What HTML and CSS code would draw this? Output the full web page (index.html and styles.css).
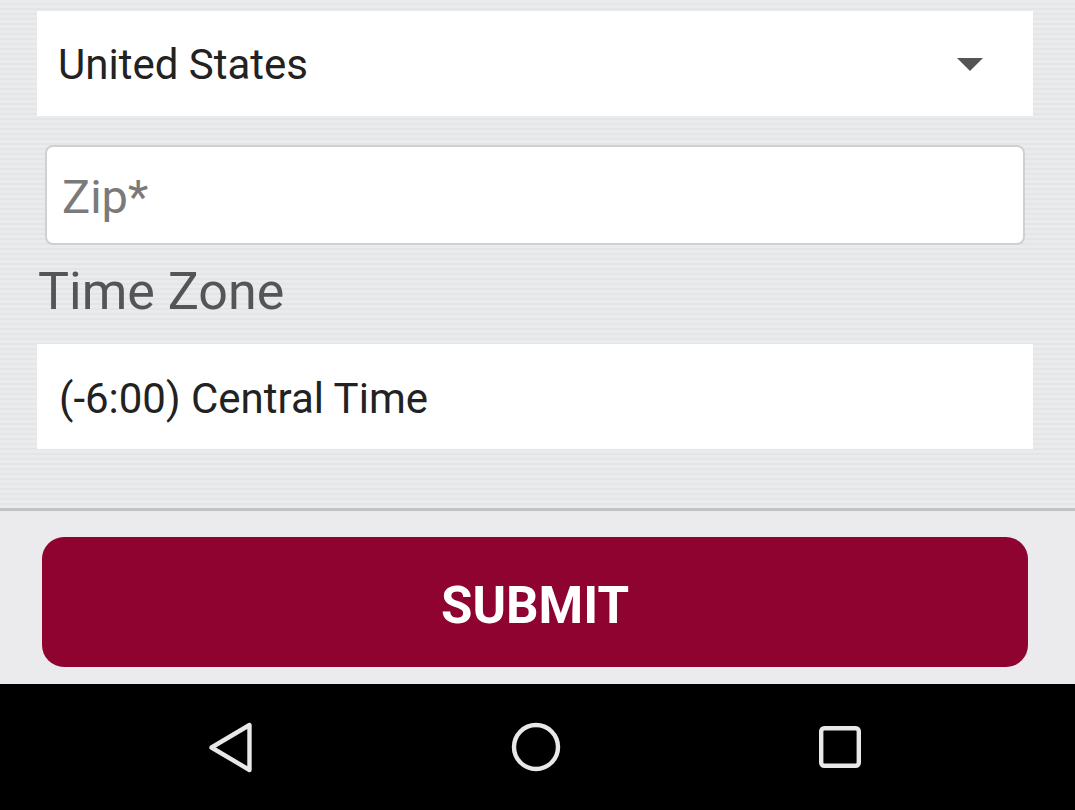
FILE: index.html
```html
<!DOCTYPE html>
<html lang="en">
<head>
<meta charset="utf-8">
<title>Form</title>
<link rel="stylesheet" href="styles.css">
</head>
<body>
<div class="screen">
  <section class="form">
    <div class="select">
      <span class="select-value">United States</span>
      <span class="caret"></span>
    </div>
    <div class="zip">
      <span class="placeholder">Zip*</span>
    </div>
    <div class="label">Time Zone</div>
    <div class="tz">
      <span class="tz-value">(-6:00) Central Time</span>
    </div>
  </section>
  <section class="footer">
    <button class="submit">SUBMIT</button>
  </section>
  <nav class="navbar">
    <svg class="nav-icon" width="60" height="60" viewBox="0 0 60 60">
      <path d="M9.5 30.5 L47.5 8 L47.5 53 Z" fill="none" stroke="#e8e8e8" stroke-width="4.4" stroke-linejoin="round"/>
    </svg>
    <svg class="nav-icon" width="60" height="60" viewBox="0 0 60 60">
      <circle cx="30" cy="30" r="22" fill="none" stroke="#e8e8e8" stroke-width="4.4"/>
    </svg>
    <svg class="nav-icon" width="60" height="60" viewBox="0 0 60 60">
      <rect x="11.2" y="11.2" width="37.6" height="37.6" rx="3" fill="none" stroke="#e8e8e8" stroke-width="4.4"/>
    </svg>
  </nav>
</div>
</body>
</html>
```
FILE: styles.css
```css
* { box-sizing: border-box; }
html, body { margin: 0; padding: 0; }
body {
  font-family: Roboto, "Noto Sans", "Liberation Sans", sans-serif;
  background: #000;
}
.screen {
  width: 1075px;
  height: 810px;
  display: flex;
  flex-direction: column;
  overflow: hidden;
}
.form {
  height: 511px;
  padding: 11px 42px 0 37px;
  background: repeating-linear-gradient(to bottom, #eaebed 0px, #eaebed 3px, #e4e5e7 3px, #e4e5e7 5px);
  border-bottom: 3px solid #c2c3c5;
  display: flex;
  flex-direction: column;
}
.select {
  height: 105px;
  background: #fff;
  display: flex;
  align-items: center;
  justify-content: space-between;
  padding: 3px 50px 0 21px;
}
.select-value {
  font-size: 42px;
  color: #222;
  line-height: 50px;
}
.caret {
  width: 0;
  height: 0;
  border-left: 13px solid transparent;
  border-right: 13px solid transparent;
  border-top: 13px solid #555;
  margin-top: -2px;
}
.zip {
  margin: 29px 8px 0 8px;
  height: 100px;
  background: #fff;
  border: 2px solid #cfd0d2;
  border-radius: 8px;
  display: flex;
  align-items: center;
  padding: 3px 0 0 15px;
}
.placeholder {
  font-size: 47px;
  color: #7a7a7a;
  line-height: 54px;
}
.label {
  margin-top: 17px;
  font-size: 52px;
  line-height: 60px;
  color: #555;
  padding-left: 1px;
}
.tz {
  margin-top: 22px;
  height: 105px;
  background: #fff;
  display: flex;
  align-items: center;
  padding: 4px 0 0 22px;
}
.tz-value {
  font-size: 42px;
  color: #222;
  line-height: 48px;
}
.footer {
  height: 173px;
  background: #ebebed;
  padding: 26px 47px 0 42px;
}
.submit {
  width: 100%;
  height: 130px;
  border: none;
  border-radius: 22px;
  background: #8e0330;
  color: #fff;
  font-family: Roboto, "Noto Sans", "Liberation Sans", sans-serif;
  font-weight: 700;
  font-size: 51px;
  padding: 7px 0 0 0;
  margin: 0;
  display: flex;
  align-items: center;
  justify-content: center;
  line-height: 60px;
}
.navbar {
  height: 126px;
  background: #000;
  display: flex;
  align-items: center;
  justify-content: center;
  gap: 244px;
  padding-right: 4px;
}
.nav-icon { display: block; }
```
